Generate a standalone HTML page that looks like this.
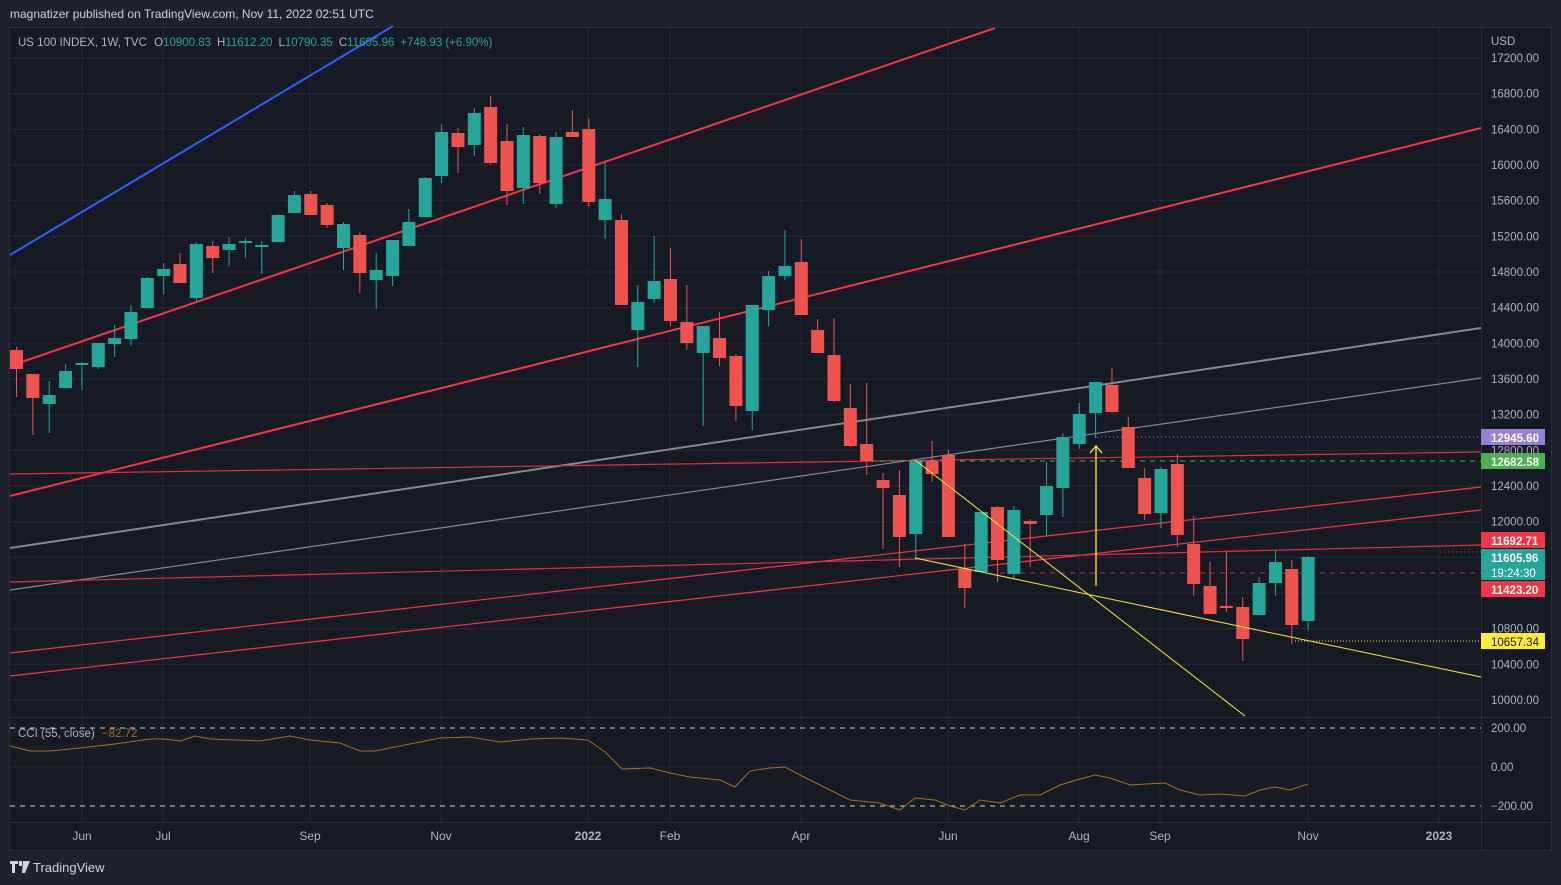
<!DOCTYPE html>
<html><head><meta charset="utf-8"><style>
body{margin:0;background:#1f222c;width:1561px;height:885px;overflow:hidden;font-family:"Liberation Sans",sans-serif;}
svg{position:absolute;left:0;top:0}
</style></head><body>
<svg id="s" width="1561" height="885" xmlns="http://www.w3.org/2000/svg" font-family="Liberation Sans, sans-serif">
<rect x="0" y="0" width="1561" height="885" fill="#1f222c"/>
<rect x="9.5" y="27.5" width="1542" height="823" fill="#161a25" stroke="#2a2e39"/>
<g id="grid" stroke="#242834" stroke-width="1"></g>
<line x1="1481.5" y1="28" x2="1481.5" y2="850" stroke="#2a2e39"/>
<line x1="10" y1="717.5" x2="1551" y2="717.5" stroke="#2a2e39"/>
<line x1="10" y1="822.5" x2="1551" y2="822.5" stroke="#2a2e39"/>
<g id="lines" fill="none"></g>
<g id="candles"></g>
<g id="over" fill="none"></g>
<text x="10" y="18" fill="#d1d4dc" font-size="12">magnatizer published on TradingView.com, Nov 11, 2022 02:51 UTC</text>
<text x="18" y="46" fill="#b2b5be" font-size="11.5">US 100 INDEX, 1W, TVC <tspan dx="4">O</tspan><tspan fill="#26a69a">10900.83</tspan><tspan dx="6">H</tspan><tspan fill="#26a69a">11612.20</tspan><tspan dx="6">L</tspan><tspan fill="#26a69a">10790.35</tspan><tspan dx="6">C</tspan><tspan fill="#26a69a">11605.96</tspan><tspan dx="6" fill="#26a69a">+748.93 (+6.90%)</tspan></text>
<text x="18" y="737" fill="#b2b5be" font-size="11.5">CCI (55, close) <tspan dx="4" fill="#a4701a">−82.72</tspan></text>
<text x="1491" y="45" fill="#b2b5be" font-size="11.5">USD</text>
<g id="ylab" fill="#b2b5be" font-size="11.5"></g>
<g id="xlab" fill="#b2b5be" font-size="12" text-anchor="middle"></g>
<g font-size="11.5" font-weight="bold">
<rect x="1481" y="429" width="64" height="16" fill="#9a7fd8"/><text x="1491" y="442" fill="#fff">12945.60</text>
<rect x="1481" y="453" width="64" height="16" fill="#4caf50"/><text x="1491" y="466" fill="#fff">12682.58</text>
<rect x="1481" y="532" width="64" height="16" fill="#f23645"/><text x="1491" y="545" fill="#fff">11692.71</text>
<rect x="1481" y="549" width="64" height="31" fill="#26a69a"/><text x="1491" y="562" fill="#fff">11605.96</text><text x="1491" y="577" fill="#fff" font-weight="normal">19:24:30</text>
<rect x="1481" y="581" width="64" height="16" fill="#f23645"/><text x="1491" y="594" fill="#fff">11423.20</text>
<rect x="1481" y="633" width="64" height="16" fill="#ffeb3b"/><text x="1491" y="646" fill="#131722" font-weight="normal">10657.34</text>
</g>
<g fill="#d1d4dc"><path d="M10 861h8v3h-3v9h-3v-9h-2z M19 861h3v5h-3z M23 861h7l-5 12h-3z"/></g>
<text x="33" y="872" fill="#d1d4dc" font-size="13">TradingView</text>
</svg>
<script>
const NS="http://www.w3.org/2000/svg";
function el(p,t,a){const e=document.createElementNS(NS,t);for(const k in a)e.setAttribute(k,a[k]);document.getElementById(p).appendChild(e);return e;}
// grid
for(let i=0;i<19;i++){const y=58+i*35.67;if(y<715)el('grid','line',{x1:10,x2:1481,y1:y,y2:y});}
[767].forEach(y=>el('grid','line',{x1:10,x2:1481,y1:y,y2:y}));
const xs=[[82,'Jun'],[163,'Jul'],[310,'Sep'],[441,'Nov'],[588,'2022'],[670,'Feb'],[801,'Apr'],[948,'Jun'],[1079,'Aug'],[1160,'Sep'],[1308,'Nov'],[1439,'2023']];
xs.forEach(([x,t])=>{el('grid','line',{x1:x,x2:x,y1:28,y2:822});const e=el('xlab','text',{x:x,y:840});e.textContent=t;if(t=='2022'||t=='2023')e.setAttribute('font-weight','bold');});
const yl=[17200,16800,16400,16000,15600,15200,14800,14400,14000,13600,13200,12800,12400,12000,10800,10400,10000];
yl.forEach(p=>{const y=58+(17200-p)*0.08917;const e=el('ylab','text',{x:1491,y:y+4});e.textContent=p.toFixed(2);});
[[728,'200.00'],[767,'0.00'],[806,'−200.00']].forEach(([y,t])=>{const e=el('ylab','text',{x:1491,y:y+4});e.textContent=t;});
// trend lines
const L=(x1,y1,x2,y2,c,w,d)=>el('lines','line',{x1,y1,x2,y2,stroke:c,'stroke-width':w,...(d?{'stroke-dasharray':d}:{})});
L(10,255,393,26,'#2962ff',2);
L(10,366,995,28,'#f23645',2);
L(10,496,1481,128,'#f23645',2);
L(10,548,1481,328,'#868993',2);
L(10,590,1481,378,'#868993',1.2);
L(10,474,1481,452,'#e0303f',1.2);
L(10,653,1481,487,'#f23645',1.2);
L(10,676,1481,510,'#f23645',1.2);
L(10,582,1481,545,'#e0303f',1.2);
L(1097,437,1481,437,'#9a7fd8',1,'1 3');
L(870,461,1481,461,'#4caf50',1,'5 5');
L(1000,573,1481,573,'#c0303c',1,'5 5');
L(1440,552,1481,552,'#f23645',1,'1 3');
L(1295,641,1481,641,'#ffeb3b',1,'1 2');
L(10,728,1481,728,'#d1d4dc',1,'5 5');
L(10,806,1481,806,'#d1d4dc',1,'5 5');
// candles: type, top, bottom, high, low
const C=[['r',350,369,347,397],['r',374,398,374,435],['g',395,404,381,433],['g',371,388,364,388],['g',363,365,362,390],['g',343,367,343,369],['g',338,344,325,357],['g',312,339,305,346],['g',278,308,277,308],['g',269,276,263,294],['r',264,283,253,283],['g',244,298,242,302],['r',246,258,241,273],['g',244,250,237,266],['g',241,242,238,258],['g',245,247,241,274],['g',215,242,214,242],['g',195,213,191,213],['r',194,215,191,215],['r',205,225,203,228],['g',224,248,222,270],['r',235,273,232,293],['g',270,280,253,309],['g',240,276,240,286],['g',222,246,209,246],['g',178,217,177,217],['g',132,176,124,183],['r',133,147,128,173],['g',113,145,108,156],['r',107,163,96,165],['r',141,191,124,205],['g',135,188,127,204],['r',136,183,134,194],['g',137,204,132,208],['r',132,137,110,137],['r',129,202,118,207],['g',199,220,163,239],['r',220,305,214,305],['g',302,330,285,367],['g',281,299,236,303],['r',279,321,248,326],['r',322,343,285,350],['g',326,353,326,426],['r',338,358,312,366],['r',356,406,354,421],['g',305,411,305,430],['g',276,310,271,326],['g',266,276,230,280],['r',262,315,239,315],['r',330,353,319,353],['r',355,401,318,402],['r',408,446,384,447],['r',444,461,383,475],['r',480,488,473,549],['r',495,537,470,567],['g',461,534,460,559],['r',461,474,441,482],['r',455,537,450,537],['r',569,588,544,608],['g',512,572,512,572],['r',507,560,506,582],['g',510,574,506,578],['r',521,524,519,567],['g',486,515,462,536],['g',437,488,433,517],['g',414,444,403,449],['g',382,413,382,438],['r',385,412,368,413],['r',427,468,417,468],['r',478,514,468,520],['g',469,513,467,528],['r',464,535,454,547],['r',544,584,516,596],['r',586,614,562,614],['r',606,608,552,612],['r',607,639,597,661],['g',583,615,577,615],['g',562,583,550,596],['r',569,625,560,644],['g',557,621,556,630]];
C.forEach((c,i)=>{const x=16.5+i*16.35;const col=c[0]=='g'?'#26a69a':'#ef5350';
el('candles','line',{x1:x,x2:x,y1:c[3],y2:c[4],stroke:col,'stroke-width':1});
el('candles','rect',{x:x-6.5,y:c[1],width:13,height:Math.max(2,c[2]-c[1]),fill:col});});
// yellow
const O=(a)=>el('over','line',a);
O({x1:915,y1:460,x2:1245,y2:716,stroke:'#ffeb3b','stroke-width':1});
O({x1:915,y1:558,x2:1481,y2:677,stroke:'#ffeb3b','stroke-width':1});
O({x1:1096,y1:586,x2:1096,y2:447,stroke:'#ffeb3b','stroke-width':1.3});
el('over','path',{d:'M1090 453 L1096 446 L1102 453',stroke:'#ffeb3b','stroke-width':1.3});
// CCI
const P=[[10,746],[30,751],[50,751],[80,748],[115,744],[150,739],[165,739],[180,741],[195,736],[210,739],[260,741],[290,736],[310,740],[340,743],[360,751],[375,751],[400,746],[440,738],[470,737],[500,742],[530,739],[560,738],[588,740],[605,752],[622,769],[650,768],[670,773],[690,777],[720,780],[735,787],[750,771],[770,768],[785,767],[800,775],[830,790],[850,800],[880,803],[900,810],[915,798],[935,800],[950,806],[965,810],[980,800],[1000,803],[1020,795],[1040,795],[1060,785],[1080,779],[1095,775],[1110,778],[1130,785],[1145,784],[1165,783],[1180,790],[1200,795],[1220,794],[1245,796],[1260,790],[1275,787],[1290,790],[1308,784]];
el('over','polyline',{points:P.map(p=>p.join(',')).join(' '),stroke:'#a4701a','stroke-width':1});
</script>
</body></html>
